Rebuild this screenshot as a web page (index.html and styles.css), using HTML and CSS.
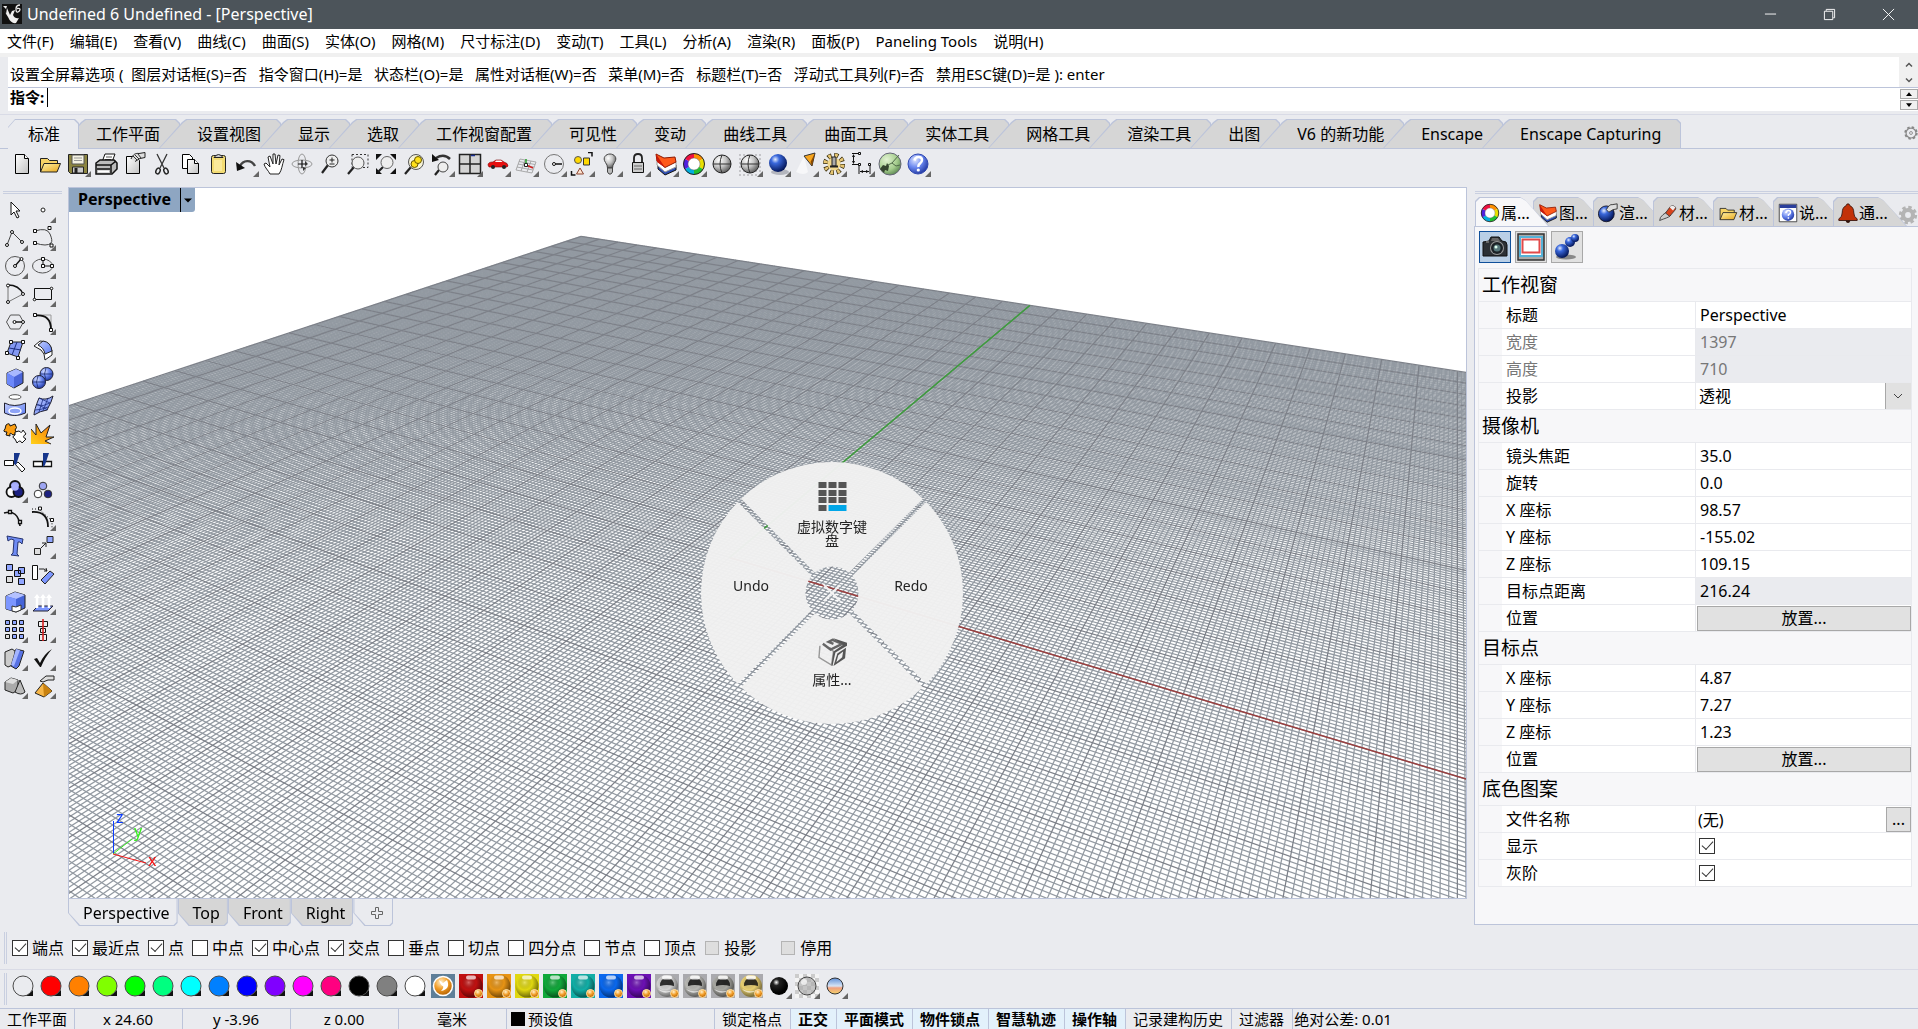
FILE: index.html
```html
<!DOCTYPE html>
<html lang="zh-CN">
<head>
<meta charset="utf-8">
<title>Undefined 6 Undefined - [Perspective]</title>
<link rel="stylesheet" href="styles.css">
</head>
<body>
<svg class="defs" aria-hidden="true">
<defs>
<radialGradient id="g-blue" cx=".35" cy=".3" r=".75"><stop offset="0" stop-color="#e4edff"/><stop offset=".3" stop-color="#3a68dc"/><stop offset="1" stop-color="#00104e"/></radialGradient>
<radialGradient id="g-peri" cx=".35" cy=".3" r=".75"><stop offset="0" stop-color="#dde4ff"/><stop offset=".5" stop-color="#6b88f0"/><stop offset="1" stop-color="#2036a0"/></radialGradient>
<radialGradient id="g-grey" cx=".35" cy=".3" r=".75"><stop offset="0" stop-color="#fff"/><stop offset=".5" stop-color="#c4c4c4"/><stop offset="1" stop-color="#555"/></radialGradient>
<radialGradient id="g-green" cx=".35" cy=".3" r=".8"><stop offset="0" stop-color="#e2f3d2"/><stop offset=".6" stop-color="#a4cc8c"/><stop offset="1" stop-color="#4f7a48"/></radialGradient>
<radialGradient id="g-black" cx=".35" cy=".3" r=".6"><stop offset="0" stop-color="#fff"/><stop offset=".3" stop-color="#222"/><stop offset="1" stop-color="#000"/></radialGradient>
<radialGradient id="g-orange" cx=".4" cy=".3" r=".7"><stop offset="0" stop-color="#fff2d0"/><stop offset=".5" stop-color="#f3a02c"/><stop offset="1" stop-color="#b66200"/></radialGradient>
<radialGradient id="g-shade" cx=".4" cy=".35" r=".65"><stop offset="0" stop-color="#fff" stop-opacity=".35"/><stop offset=".5" stop-color="#000" stop-opacity="0"/><stop offset="1" stop-color="#000" stop-opacity=".5"/></radialGradient>
<linearGradient id="g-steel" x1="0" y1="0" x2="1" y2="1"><stop offset="0" stop-color="#fff"/><stop offset="1" stop-color="#c2c2c2"/></linearGradient>
<linearGradient id="g-folder" x1="0" y1="0" x2="1" y2="1"><stop offset="0" stop-color="#fff3a8"/><stop offset="1" stop-color="#e8a71c"/></linearGradient>
<linearGradient id="g-sky" x1="0" y1="0" x2="0" y2="1"><stop offset="0" stop-color="#5e8fd8"/><stop offset=".5" stop-color="#d6e4f6"/><stop offset=".62" stop-color="#f0a080"/><stop offset="1" stop-color="#f4d26a"/></linearGradient>
<linearGradient id="g-per" x1="0" y1="0" x2="1" y2="1"><stop offset="0" stop-color="#c3ceff"/><stop offset="1" stop-color="#5c7cf0"/></linearGradient>
<linearGradient id="g-flame" x1="0" y1="1" x2="1" y2="0"><stop offset="0" stop-color="#ffd21a"/><stop offset=".6" stop-color="#fb9a10"/><stop offset="1" stop-color="#e05a00"/></linearGradient>

<symbol id="i-new" viewBox="0 0 24 24"><path d="M5.500 2.500h9l4 4v15h-13z" fill="url(#g-steel)" stroke="#000"/><path d="M14.500 2.500v4h4" fill="#fff" stroke="#000"/></symbol>
<symbol id="i-open" viewBox="0 0 24 24"><path d="M2.500 20V6.500h7l2 2h8v3" fill="#f6d365" stroke="#222"/><path d="M2.500 20 6 11.500h16.500L19 20z" fill="url(#g-folder)" stroke="#222"/></symbol>
<symbol id="i-save" viewBox="0 0 24 24"><path d="M2.500 2.500h19v19h-17l-2-2z" fill="#8b8440" stroke="#222"/><path d="M6 3h12v9H6z" fill="#f4f2e2" stroke="#555"/><path d="M6.500 15h11v6h-11z" fill="#c9c9c9" stroke="#222"/><path d="M8.500 16h3v5h-3z" fill="#222"/><path d="M8 6h8M8 8.500h8" stroke="#999"/></symbol>
<symbol id="i-print" viewBox="0 0 24 24"><path d="M8 10 11 2h10l-3 8" fill="#fff" stroke="#111"/><path d="M12 5h6M11 7.500h6" stroke="#555"/><path d="M2 11l4-3h14l3 3v6l-5 5H2z" fill="#bbb" stroke="#111" stroke-width="1.500"/><path d="M2 13h15l5-4M17 13v8M3 17h13" fill="none" stroke="#111" stroke-width="1.500"/><path d="M4 18.500h11v2H4z" fill="#fff"/></symbol>
<symbol id="i-props" viewBox="0 0 24 24"><path d="M4.500 4.500h9l4 4v13h-13z" fill="url(#g-steel)" stroke="#000"/><path d="M9 7c2-5 5-6 8-5.500l6-1v5l-5 1-5 3" fill="#ddd" stroke="#222"/><path d="M11 4l4 4M13 3l4 4M16 2l3 4" stroke="#333"/></symbol>
<symbol id="i-cut" viewBox="0 0 24 24"><path d="M7 2l7 14M17 2l-7 14" stroke="#333" stroke-width="1.300"/><ellipse cx="8" cy="19" rx="2" ry="3" transform="rotate(25 8 19)" fill="none" stroke="#222" stroke-width="1.400"/><ellipse cx="16" cy="19" rx="2" ry="3" transform="rotate(-25 16 19)" fill="none" stroke="#222" stroke-width="1.400"/></symbol>
<symbol id="i-copy" viewBox="0 0 24 24"><path d="M4.500 2.500h7l3 3v11h-10z" fill="#fff" stroke="#000"/><path d="M9.500 7.500h7l4 4v10h-11z" fill="url(#g-steel)" stroke="#000"/><path d="M16.500 7.500v4h4" fill="#fff" stroke="#000"/></symbol>
<symbol id="i-paste" viewBox="0 0 24 24"><rect x="5.500" y="3.500" width="14" height="18" rx="2" fill="#f3dc74" stroke="#222"/><path d="M8 5.500q4.500-6 9 0z" fill="#ccc" stroke="#222"/><path d="M8 8h8v11H8z" fill="#fae99b"/></symbol>
<symbol id="i-undo" viewBox="0 0 24 24"><path d="M6 14C9 8 17 7 21 14" fill="none" stroke="#444" stroke-width="2.400"/><path d="M2 10l1 9 8-3z" fill="#111"/></symbol>
<symbol id="i-hand" viewBox="0 0 24 24"><path d="M8 22C6 18 3 16 2 12l2-1 4 4L6 5l2-1 3 8V2h2l1 10 2-9 2 .5L17 13l3-6 2 .6C20 13 20 18 17 22z" fill="#fff" stroke="#222"/></symbol>
<symbol id="i-rotate" viewBox="0 0 24 24"><ellipse cx="12" cy="12" rx="10" ry="4" fill="none" stroke="#999"/><ellipse cx="12" cy="12" rx="4" ry="10" fill="none" stroke="#999"/><path d="M12 8v8M8 12h8" stroke="#111" stroke-width="1.200"/><path d="M13 15l3 1-3 3zM15 9l3 3-3 2z" fill="#333"/></symbol>
<symbol id="i-zoom" viewBox="0 0 24 24"><path d="M10 13L4 21" stroke="#222" stroke-width="2.200"/><circle cx="14" cy="9" r="6" fill="#eee" stroke="#333"/><path d="M11.500 8h5M14 5.500v5M11.500 12h5" stroke="#222"/></symbol>
<symbol id="i-zoomwin" viewBox="0 0 24 24"><path d="M6 2.500h16v13H6z" fill="none" stroke="#333" stroke-dasharray="2 2"/><path d="M8 15L2 22" stroke="#222" stroke-width="2.200"/><circle cx="12" cy="11" r="6" fill="#eee" stroke="#555"/></symbol>
<symbol id="i-zoomext" viewBox="0 0 24 24"><path d="M2 2h6L2 8zM22 2h-6l6 6zM2 22v-6l6 6zM22 22h-6l6-6z" fill="#111"/><path d="M9 15l-5 5" stroke="#222" stroke-width="2.200"/><circle cx="13" cy="10.500" r="6" fill="#eee" stroke="#666"/></symbol>
<symbol id="i-zoomsel" viewBox="0 0 24 24"><path d="M9 15L3 22" stroke="#222" stroke-width="2.200"/><circle cx="14" cy="10" r="7.500" fill="#f6f3d8" stroke="#555"/><circle cx="12.500" cy="12" r="3.500" fill="#ffe11a" stroke="#655600"/><circle cx="16" cy="8" r="3.500" fill="#ffe11a" stroke="#655600"/></symbol>
<symbol id="i-zoomback" viewBox="0 0 24 24"><path d="M6 6q8-5 14 1" fill="none" stroke="#333" stroke-width="2.500"/><path d="M2 2v8l7-2z" fill="#111"/><path d="M9 18l-4 5" stroke="#222" stroke-width="2.200"/><circle cx="13" cy="15" r="5" fill="#eee" stroke="#444"/></symbol>
<symbol id="i-views" viewBox="0 0 24 24"><path d="M1.500 2.500h21v19h-21z" fill="#d4d4d4" stroke="#222" stroke-width="1.500"/><path d="M12 2v20M1 12h22" stroke="#222" stroke-width="1.500"/><path d="M13 3.500h4" stroke="#1a2f90" stroke-width="1.500"/></symbol>
<symbol id="i-car" viewBox="0 0 24 24"><path d="M2 13q0-3 5-3l3-2h5l3 2q4 1 4 4l-1 1H3z" fill="#e81010" stroke="#7a0000" stroke-width=".6"/><path d="M10 8.500h5l1.500 1.500H9z" fill="#fff"/><circle cx="7" cy="15" r="2" fill="#222"/><circle cx="18" cy="15" r="2" fill="#222"/></symbol>
<symbol id="i-cplane" viewBox="0 0 24 24"><path d="M6 7l16 3-4 11-16-3zM4 12l16 3M11 8L7 19M17 9l-4 11M5 9.500l16 3M3 15l16 3" fill="none" stroke="#999" stroke-width=".8"/><path d="M12 13V7" stroke="#18a020" stroke-width="1.400"/><path d="M12 13l7 3" stroke="#d02020" stroke-width="1.400"/><path d="M10.500 11.500h3v3h-3z" fill="#fff" stroke="#222"/></symbol>
<symbol id="i-circ" viewBox="0 0 24 24"><circle cx="12" cy="12" r="9.500" fill="none" stroke="#777"/><path d="M13 12h7" stroke="#111" stroke-width="1.500"/><circle cx="12" cy="12" r="1.500" fill="#fff" stroke="#111"/></symbol>
<symbol id="i-select" viewBox="0 0 24 24"><path d="M18 .500h4v4M1.500 19v4h4" fill="none" stroke="#111" stroke-width="1.500"/><circle cx="8" cy="8" r="3.500" fill="#ffd800" stroke="#555"/><path d="M13.500 6h6v7h-6z" fill="#ffd800" stroke="#333"/><path d="M10 16l3.500 6h-7z" fill="#ffe3cf" stroke="#8a4430"/></symbol>
<symbol id="i-bulb" viewBox="0 0 24 24"><path d="M9.500 16q0-3-2-5.500C4 5.500 8 2 12 2s8 3.500 4.500 8.500q-2 2.500-2 5.500z" fill="url(#g-grey)" stroke="#444"/><path d="M9.500 16h5v4l-1.500 2h-2l-1.500-2z" fill="#bbb" stroke="#444"/></symbol>
<symbol id="i-lock" viewBox="0 0 24 24"><path d="M8 11V6q0-4 4-4t4 4v5" fill="none" stroke="#222" stroke-width="1.800"/><path d="M6.500 10.500h11v10h-11z" fill="#ccc" stroke="#111"/><path d="M8 14h8M8 17h8" stroke="#666"/></symbol>
<symbol id="i-layers" viewBox="0 0 24 24"><path d="M4 12v5l7 6 11-5v-5z" fill="#2c4db4" stroke="#111"/><path d="M3 8v5l8 7 11-5v-5z" fill="#fff" stroke="#999"/><path d="M2 2l8 4 11-1 1 5-11 5.500L3 9z" fill="#ff5a1a" stroke="#8e1800"/><path d="M2 2l9 13.500L3 10z" fill="#c81a0c"/></symbol>
<symbol id="i-wheel" viewBox="0 0 24 24"><g fill="none" stroke-width="5"><path d="M12 4a8 8 0 0 1 7 4" stroke="#ff9000"/><path d="M19 8a8 8 0 0 1 0 8" stroke="#e8e000"/><path d="M19 16a8 8 0 0 1-7 4" stroke="#20c030"/><path d="M12 20a8 8 0 0 1-7-4" stroke="#00b0e0"/><path d="M5 16a8 8 0 0 1 0-8" stroke="#5020e0"/><path d="M5 8a8 8 0 0 1 7-4" stroke="#f01040"/></g><circle cx="12" cy="12" r="10.500" fill="none" stroke="#222"/><circle cx="12" cy="12" r="6" fill="#fff" stroke="#666" stroke-width=".5"/></symbol>
<symbol id="i-shade" viewBox="0 0 24 24"><circle cx="12" cy="12" r="9" fill="url(#g-grey)" stroke="#222"/><path d="M3 12h18M12 3q-4 9 0 18" fill="none" stroke="#333"/></symbol>
<symbol id="i-ghost" viewBox="0 0 24 24"><path d="M1 3h23M1 7h23M1 11h23M1 15h23M1 19h23M1 23h23" stroke="#c4c4c8" stroke-width="2" stroke-dasharray="2 2"/><circle cx="12" cy="12" r="9" fill="url(#g-grey)" stroke="#222"/><path d="M3 12h18M12 3q-4 9 0 18" fill="none" stroke="#333"/></symbol>
<symbol id="i-blue" viewBox="0 0 24 24"><ellipse cx="14" cy="20" rx="9" ry="3" fill="#b4b6be"/><circle cx="12" cy="11" r="9" fill="url(#g-blue)"/></symbol>
<symbol id="i-spot" viewBox="0 0 24 24"><path d="M10 4L2 20q8 4 12 0z" fill="#fff" opacity=".6"/><path d="M10 4l11-3-3 13z" fill="#f7a51e" stroke="#333"/><path d="M21 1l-3 13-1.500-4z" fill="#8a4a00"/></symbol>
<symbol id="i-gear" viewBox="0 0 24 24"><circle cx="12" cy="12" r="8.500" fill="none" stroke="#332808" stroke-width="5" stroke-dasharray="4 2.675"/><circle cx="12" cy="12" r="8.500" fill="none" stroke="#e6c674" stroke-width="4" stroke-dasharray="2.600 4.075" stroke-dashoffset="-.7"/><circle cx="12" cy="12" r="6.500" fill="#f1d88e"/><path d="M10 5h4v9h-4z" fill="#aaa" stroke="#222"/><path d="M8 14.500h8" stroke="#222" stroke-width="2"/></symbol>
<symbol id="i-dim" viewBox="0 0 24 24"><path d="M2 1.500h8M2 12.500h7M3.500 3v8M9 12v10M20 12v10M10 19.500h9" fill="none" stroke="#111"/><path d="M8.500 .500h2v2h-2zM8.500 11.500h2v2h-2zM18.500 11.500h2v2h-2z" fill="#fff" stroke="#111"/><path d="M3.500 2l-1.500 3h3zM3.500 12l-1.500-3h3zM10 19.500l3-1.500v3zM19 19.500l-3-1.500v3z" fill="#111"/></symbol>
<symbol id="i-hopper" viewBox="0 0 24 24"><circle cx="12" cy="12" r="11" fill="url(#g-green)" stroke="#667"/><path d="M10 13l4-2 7-8M14 11l4 3 4-1" fill="none" stroke="#4f6a48"/><path d="M2 17l3-4 3 1 1-3 2 3-1 5-3-1-1 3z" fill="#35452f"/></symbol>
<symbol id="i-help" viewBox="0 0 24 24"><circle cx="12" cy="12" r="10" fill="url(#g-peri)" stroke="#3048b0"/><path d="M8.500 8.500q.5-3.500 4-3.500t3.500 3q0 2-2 3.500t-1.500 3.500" fill="none" stroke="#fff" stroke-width="2.500"/><circle cx="12.300" cy="18" r="1.600" fill="#fff"/></symbol>

<symbol id="i-arrow" viewBox="0 0 24 24"><path d="M8 4v13l3-3 3 6 2-1-3-6h4z" fill="#fff" stroke="#111"/></symbol>
<symbol id="i-point" viewBox="0 0 24 24"><circle cx="12" cy="12" r="2" fill="#fff" stroke="#222"/></symbol>
<symbol id="i-poly" viewBox="0 0 24 24"><path d="M4 19L9 6l10 10" fill="none" stroke="#444"/><g fill="#fff" stroke="#111"><circle cx="4" cy="19" r="1.500"/><circle cx="9" cy="6" r="1.500"/><circle cx="19" cy="16" r="1.500"/></g></symbol>
<symbol id="i-curve" viewBox="0 0 24 24"><path d="M4 5q12-4 15 3t1 9q-4 4-16 0" fill="none" stroke="#444"/><path d="M2.500 3.500h3v3h-3zM17 .500h3v3h-3zM2.500 15.500h3v3h-3zM19 18h3v3h-3z" fill="#fff" stroke="#111"/></symbol>
<symbol id="i-circle" viewBox="0 0 24 24"><circle cx="12" cy="12" r="9.500" fill="none" stroke="#555"/><path d="M12 12l6-7" stroke="#111" stroke-width="1.300"/><circle cx="12" cy="12" r="1.500" fill="#fff" stroke="#111"/><circle cx="18.500" cy="5" r="1.500" fill="#fff" stroke="#111"/></symbol>
<symbol id="i-ellipse" viewBox="0 0 24 24"><ellipse cx="11.500" cy="12" rx="10" ry="7" fill="none" stroke="#555"/><path d="M12 5v7h9" fill="none" stroke="#111"/><path d="M10.500 3.500h3v3h-3zM10.500 10.500h3v3h-3zM19.500 10.500h3v3h-3z" fill="#fff" stroke="#111"/></symbol>
<symbol id="i-arc" viewBox="0 0 24 24"><path d="M5 3v17l15-8" fill="none" stroke="#777"/><path d="M5 3q11 0 15 9" fill="none" stroke="#111" stroke-width="1.400"/><g fill="#fff" stroke="#111"><circle cx="5" cy="3.500" r="1.500"/><circle cx="5" cy="20" r="1.500"/><circle cx="20" cy="12" r="1.500"/></g></symbol>
<symbol id="i-rect" viewBox="0 0 24 24"><path d="M3.500 6.500h17v11h-17z" fill="none" stroke="#111"/><circle cx="3.500" cy="17.500" r="1.300" fill="#fff" stroke="#111"/><circle cx="20.500" cy="6.500" r="1.300" fill="#fff" stroke="#111"/></symbol>
<symbol id="i-hex" viewBox="0 0 24 24"><path d="M3.500 12l4-7h9l4 7-4 7h-9z" fill="none" stroke="#555"/><path d="M12 12h8" stroke="#111" stroke-width="1.400"/><circle cx="11.500" cy="12" r="1.500" fill="#fff" stroke="#111"/><circle cx="20" cy="12" r="1.500" fill="#fff" stroke="#111"/></symbol>
<symbol id="i-fillet" viewBox="0 0 24 24"><path d="M5 5h15v15" fill="none" stroke="#999"/><path d="M5 5.500q15-1 15 14" fill="none" stroke="#111" stroke-width="1.800"/><path d="M2.500 3.500h3v3h-3zM18.500 18.500h3v3h-3z" fill="#fff" stroke="#111"/></symbol>
<symbol id="i-srf" viewBox="0 0 24 24"><path d="M8 4h12l-5 15L4 15z" fill="#8398f2" stroke="#222"/><path d="M14 4l-5 13M6 10l12 2" stroke="#1d2f80"/><path d="M6.500 2.500h3v3h-3zM18.500 2.500h3v3h-3zM2.500 13.500h3v3h-3zM13.500 18.500h3v3h-3z" fill="#fff" stroke="#111"/></symbol>
<symbol id="i-bend" viewBox="0 0 24 24"><path d="M3 8l6-5q10 0 12 10v4l-7 5q0-7-4-10z" fill="#fff" stroke="#222"/><path d="M7 7l5-4q8 1 9 10l-7 3q-1-6-7-9z" fill="url(#g-per)" stroke="#222"/></symbol>
<symbol id="i-box" viewBox="0 0 24 24"><path d="M4 7l9-4 7 3v11l-9 5-7-4z" fill="#4a64d8" stroke="#222"/><path d="M4 7l9-4 7 3-9 5z" fill="#a8b8ff"/><path d="M4 7l7 4v11l-7-4z" fill="#6c88fa"/></symbol>
<symbol id="i-balls" viewBox="0 0 24 24"><circle cx="15.500" cy="8" r="6.500" fill="url(#g-peri)" stroke="#223"/><circle cx="8" cy="16" r="6.500" fill="url(#g-peri)" stroke="#223"/><path d="M9 8h13M2 16h13M15 2q-3 6 0 12M7 10q-3 6 0 12" fill="none" stroke="#182a70" stroke-width=".8"/></symbol>
<symbol id="i-proj" viewBox="0 0 24 24"><ellipse cx="12" cy="3" rx="6" ry="2.300" fill="#fff" stroke="#555"/><path d="M1.500 9q10 5 21 0v10q-11 5-21 0z" fill="url(#g-per)" stroke="#223"/><ellipse cx="12" cy="17" rx="6" ry="3" fill="#8ea3f6" stroke="#fff" stroke-width="1.500"/></symbol>
<symbol id="i-mesh" viewBox="0 0 24 24"><path d="M8 4q7 3 14-2-1 5-6 14-7 1-13 5 0-5 5-17z" fill="url(#g-per)" stroke="#223"/><path d="M12 5L8 18M17 4l-5 13M6 11q6 2 13-2M4 16q6 0 13-3M8 4l11 5M6 10l11 6" fill="none" stroke="#1d2f80" stroke-width=".8"/></symbol>
<symbol id="i-puzzle" viewBox="0 0 24 24"><path d="M3 3q4-3 4 1l5-2q3 4 0 6l2 3-4 2q-4-4-3 1l-4-1 1-3q-5 0-2-3z" fill="#fb9e12" stroke="#111"/><path d="M12 10l4-1q3 3 4-1l3 4q-5 3 0 5l-4 4q-2-4-5 0l-2-4q-4-2 0-4z" fill="#fff" stroke="#111"/></symbol>
<symbol id="i-flame" viewBox="0 0 24 24"><path d="M0 22V7l5 6L5 2l5 9 9-8-4 12 8 0-9 4 6 3z" fill="url(#g-flame)"/><path d="M0 7l5 6L5 2l5 9 9-8-4 12 8 0-9 4 6 3" fill="none" stroke="#222"/></symbol>
<symbol id="i-trim" viewBox="0 0 24 24"><path d="M1.500 10.500h9v5h-9zM12 14l3-2 7 7-3 3z" fill="#fff" stroke="#111"/><path d="M11 3h6l-4 12-2-1z" fill="#16368c"/></symbol>
<symbol id="i-split" viewBox="0 0 24 24"><path d="M2.500 11.500h9v5h-9zM12.500 11.500h8v5h-8z" fill="#fff" stroke="#111" stroke-width="1.300"/><path d="M12 3h6l-4 12-2 2z" fill="#16368c"/></symbol>
<symbol id="i-group" viewBox="0 0 24 24"><g stroke="#111" stroke-width="1.800"><circle cx="12" cy="8" r="5" fill="#9da5f2"/><circle cx="8.500" cy="14" r="5" fill="#fff"/><circle cx="15.500" cy="14" r="5" fill="#1c2080"/></g><circle cx="12" cy="9" r="3.800" fill="#aab0ff"/></symbol>
<symbol id="i-ungroup" viewBox="0 0 24 24"><g stroke="#333"><circle cx="12" cy="8" r="3.800" fill="#9da5f2"/><circle cx="7" cy="16" r="3.800" fill="#fff"/><circle cx="17" cy="16" r="3.800" fill="#1c2080"/></g></symbol>
<symbol id="i-editpt" viewBox="0 0 24 24"><path d="M1 7q14-4 16 13" fill="none" stroke="#111" stroke-width="1.600"/><path d="M5.500 4.500h3v3h-3zM15.500 14.500h3v3h-3z" fill="#fff" stroke="#111" stroke-width="1.300"/></symbol>
<symbol id="i-ctrl" viewBox="0 0 24 24"><path d="M1 6q16-1 16 15" fill="none" stroke="#111" stroke-width="1.800"/><path d="M1 3h7l13 12v7" fill="none" stroke="#111" stroke-dasharray="1 2"/><path d="M7.500 1h3v3h-3zM19.500 12.500h3v3h-3z" fill="#fff" stroke="#111"/></symbol>
<symbol id="i-letter" viewBox="0 0 24 24"><path d="M4 2l16 3-1 5-2-2-2 0-1 12 2 2-8-1 2-2 1-13-3-1-3 2z" fill="#6f8cf4" stroke="#26336e"/></symbol>
<symbol id="i-move" viewBox="0 0 24 24"><path d="M16 2.500h6v6h-6z" fill="#8fa6ff" stroke="#222"/><path d="M3.500 14.500h6v6h-6z" fill="#ddd" stroke="#222"/><path d="M10 14l5-5m0 0h-4m4 0v4" stroke="#222" fill="none"/></symbol>
<symbol id="i-copyobj" viewBox="0 0 24 24"><g stroke="#111" fill="#91a6ff"><path d="M3.500 2.500h6v6h-6zM15.500 5.500h6v6h-6zM11.500 8.500h6v6h-6zM15.500 16.500h6v6h-6z"/><path d="M3.500 14.500h6v6h-6z" fill="#ddd"/></g></symbol>
<symbol id="i-orient" viewBox="0 0 24 24"><path d="M1.500 3.500h5v14h-5z" fill="#fff" stroke="#111"/><path d="M10 18L19 9l4 3-9 10z" fill="#7c96ff" stroke="#222"/><path d="M8 7h5l3 2m-1-3l1 3h-3" fill="none" stroke="#222"/></symbol>
<symbol id="i-solid" viewBox="0 0 24 24"><path d="M3 6l9-4 10 3v13l-9 4-10-3z" fill="#4564d8" stroke="#222"/><path d="M3 6l9-4 10 3-9 4z" fill="#b4c1ff"/><path d="M3 6l10 3v13l-10-3z" fill="#7c96ff"/><path d="M9 16l4 1 5-2v5l-5 2-4-1z" fill="#fff" stroke="#333"/></symbol>
<symbol id="i-extrude" viewBox="0 0 24 24"><path d="M7 16h15l-5 5H2z" fill="#7c96ff" stroke="#223"/><path d="M6 18V6M12 18V6M18 18V6" stroke="#fff" stroke-width="2.500"/><path d="M3 8l3-4 3 4zM9 8l3-4 3 4zM15 8l3-4 3 4z" fill="#fff"/></symbol>
<symbol id="i-array" viewBox="0 0 24 24"><path d="M2.500 2.500h4v4h-4zM9.500 2.500h4v4h-4zM16.500 2.500h4v4h-4zM2.500 9.500h4v4h-4zM9.500 9.500h4v4h-4zM16.500 9.500h4v4h-4zM9.500 16.500h4v4h-4zM16.500 16.500h4v4h-4z" fill="#8fa6ff" stroke="#111"/><path d="M2.500 16.500h4v4h-4z" fill="#ddd" stroke="#111"/></symbol>
<symbol id="i-align" viewBox="0 0 24 24"><path d="M7.500 3.500h9v5h-9zM9.500 10.500h5v4h-5zM8.500 16.500h7v6h-7z" fill="#eee" stroke="#111"/><path d="M12 1v22" stroke="#d42020" stroke-width="2" opacity=".8"/></symbol>
<symbol id="i-shear" viewBox="0 0 24 24"><path d="M2 6l7-3 3 2v13l-7 3-3-2z" fill="#ccc" stroke="#222"/><path d="M13 3l8 2-5 15-3 3-5-3z" fill="#5872e4" stroke="#222"/><path d="M13 3l4 1-6 16-3-1z" fill="#a4b5ff"/></symbol>
<symbol id="i-check" viewBox="0 0 24 24"><path d="M3 13l3-1 3 5Q13 8 21 3q-7 8-11 18H9z" fill="#111"/></symbol>
<symbol id="i-prims" viewBox="0 0 24 24"><path d="M2 8l6-4 7 2v10l-5 3-8-3z" fill="#aaa" stroke="#222"/><path d="M2 8l6-4 7 2-5 4z" fill="#ddd"/><path d="M17 6l5 12q-4 4-10 0z" fill="#bbb" stroke="#222"/></symbol>
<symbol id="i-pyr" viewBox="0 0 24 24"><path d="M12 9l9 8-8 6-9-4z" fill="#f6b648" stroke="#222"/><path d="M12 9l9 8-8 6z" fill="#c98210"/><path d="M9 7l6-5h8v4h-6l-5 2z" fill="#ddd" stroke="#222"/></symbol>

<symbol id="s-dot" viewBox="0 0 24 24"><path d="M16 21l6-5v6h-9z" fill="#111"/><circle cx="12" cy="12" r="10" stroke="#4a4a4a"/></symbol>
<symbol id="s-none" viewBox="0 0 24 24"><path d="M0 0h24v24H0z" fill="#5f7f98"/><circle cx="12" cy="12" r="9.500" fill="url(#g-orange)" stroke="#fff" stroke-width="1.500"/><path d="M8 6l4 3 4-3q4 9-6 11 3-3 2-5-2 0-4-6z" fill="#fff"/></symbol>
<symbol id="s-tile" viewBox="0 0 24 24"><path d="M0 0h24v24H0z"/><circle cx="12" cy="12" r="11.500"/><circle cx="12" cy="12" r="11.500" fill="url(#g-shade)"/><rect x="7" y="1.500" width="10" height="4" rx="2" fill="#fff" opacity=".7"/><circle cx="19.500" cy="19.500" r="4" fill="url(#g-orange)" stroke="#ffe2a8"/></symbol>
<symbol id="s-metal" viewBox="0 0 24 24"><path d="M0 0h24v24H0z" fill="#aaaaae"/><circle cx="12" cy="12" r="11"/><circle cx="12" cy="12" r="11" fill="url(#g-shade)"/><path d="M5 12q0-8 7-8t7 8q-7-2-14 0z" fill="#111" opacity=".85"/><rect x="7" y="1.500" width="10" height="4" rx="2" fill="#fff" opacity=".85"/><path d="M3 15q7 7 15 1-7 3-15-1z" fill="#fff" opacity=".6"/><circle cx="19.500" cy="19.500" r="4" fill="url(#g-orange)" stroke="#ffe2a8"/></symbol>
<symbol id="s-black" viewBox="0 0 24 24"><circle cx="12" cy="12" r="9" fill="url(#g-black)"/></symbol>
<symbol id="s-glass" viewBox="0 0 24 24"><path d="M0 0h24v24H0z" fill="#f4f4f4"/><path d="M0 2h24M0 10h24M0 18h24" stroke="#ccc" stroke-width="4" stroke-dasharray="4 4"/><path d="M4 6h20M4 14h20M4 22h20" stroke="#ccc" stroke-width="4" stroke-dasharray="4 4"/><circle cx="12" cy="12" r="9" fill="#aaa" fill-opacity=".65" stroke="#444"/><circle cx="9" cy="8" r="3" fill="#fff" opacity=".7"/></symbol>
<symbol id="s-env" viewBox="0 0 24 24"><circle cx="12" cy="12" r="8" fill="url(#g-sky)" stroke="#333"/></symbol>
<symbol id="p-brush" viewBox="0 0 24 24"><path d="M2 21q0-4 4-7t5-3l4 4q-2 2-5 3t-8 3z" fill="#ccc" stroke="#333"/><path d="M9 12l6-8q3-2 6 1 1 2-1 4l-6 7z" fill="#d8431c" stroke="#333"/><path d="M15 4q3-2 6 1l-3 4-4-4z" fill="#eee"/></symbol>
<symbol id="p-help" viewBox="0 0 24 24"><path d="M1.500 1.500h21v21h-21z" fill="#fff" stroke="#333"/><path d="M2 2h20v4H2z" fill="#2b3f9c"/><circle cx="12" cy="14" r="7.500" fill="url(#g-peri)"/><path d="M9.500 12q.5-3 3-3t2.500 2-2.500 3v1.500M12.500 17v2" fill="none" stroke="#fff" stroke-width="1.800"/></symbol>
<symbol id="p-bell" viewBox="0 0 24 24"><path d="M10 3q0-2 2-2t2 2q5 2 5 9 0 5 4 7v2H1v-2q4-2 4-7 0-7 5-9z" fill="#c23208" stroke="#301008"/><path d="M9 21h6q-1 3-3 3t-3-3z" fill="#301008"/></symbol>
<symbol id="p-render" viewBox="0 0 24 24"><circle cx="10" cy="13" r="9.500" fill="url(#g-blue)" stroke="#112"/><path d="M10 8q4-7 7-6l6-1v6l-5 1-5 3z" fill="#ddd" stroke="#222"/></symbol>
<symbol id="p-camera" viewBox="0 0 28 28"><path d="M2 9l6-1 2-4h8l3 4 4 1 1 3v11H2z" fill="#2c3034" stroke="#111"/><path d="M5 8h3v2H5zM11 5h6l2 3h-9z" fill="#666"/><circle cx="16" cy="15" r="7" fill="#999"/><circle cx="16" cy="15" r="6" fill="#1c2226"/><circle cx="16" cy="15" r="3.500" fill="#56767a"/><circle cx="15" cy="14" r="1.500" fill="#dfe"/></symbol>
<symbol id="p-frame" viewBox="0 0 28 28"><path d="M1 1h26v26H1z" fill="#aaa" stroke="#333" stroke-width="1.500"/><path d="M3 4h22v19H3z" fill="#fff" stroke="#56b2d8" stroke-width="2"/><path d="M5.500 6.500h17v13h-17z" fill="#fff" stroke="#e24a4a" stroke-width="2"/></symbol>
<symbol id="p-chain" viewBox="0 0 28 28"><ellipse cx="13" cy="24" rx="10" ry="2.500" fill="#888"/><circle cx="9" cy="18" r="7" fill="url(#g-blue)"/><circle cx="17" cy="9" r="5" fill="url(#g-blue)"/><circle cx="22" cy="5" r="4" fill="url(#g-blue)"/></symbol>
<symbol id="p-cog" viewBox="0 0 24 24"><circle cx="12" cy="12" r="6" fill="none" stroke="currentColor" stroke-width="5"/><circle cx="12" cy="12" r="9" fill="none" stroke="currentColor" stroke-width="4" stroke-dasharray="4 3.070"/></symbol>
<symbol id="p-cogline" viewBox="0 0 24 24"><circle cx="12" cy="12" r="9.500" fill="none" stroke="#888" stroke-width="4" stroke-dasharray="4 3.460"/><circle cx="12" cy="12" r="8.500" fill="#eaebef" stroke="#888" stroke-width="2"/><circle cx="12" cy="12" r="2.500" fill="none" stroke="#888" stroke-width="1.500"/></symbol>
</defs>
</svg>

<div class="app">
<header class="titlebar">
  <svg class="logo" viewBox="0 0 20 20"><path d="M0 0h20v20H0z" fill="#111"/><path d="M1 5l5 8q3 7 8 6l3-5q-4 1-6-3l2-5-3 1-2 4-3-7-1 6zM1 2l3 3 1-3z" fill="#eee"/><path d="M18 1q-4 0-4 4t2 3 2-2.500-3-1" fill="none" stroke="#eee" stroke-width="1.300"/></svg>
  <h1>Undefined 6 Undefined - [Perspective]</h1>
  <div class="winbtns">
    <button aria-label="最小化"><svg viewBox="0 0 14 14"><path d="M1 6.500h12"/></svg></button>
    <button aria-label="还原"><svg viewBox="0 0 14 14"><path d="M1.500 3.500h9v9h-9zM3.500 3V1.500h9v9H11"/></svg></button>
    <button aria-label="关闭"><svg viewBox="0 0 14 14"><path d="M1 1l12 12M13 1L1 13"/></svg></button>
  </div>
</header>
<nav class="menu">
  <a href="#">文件(F)</a><a href="#">编辑(E)</a><a href="#">查看(V)</a><a href="#">曲线(C)</a><a href="#">曲面(S)</a><a href="#">实体(O)</a><a href="#">网格(M)</a><a href="#">尺寸标注(D)</a><a href="#">变动(T)</a><a href="#">工具(L)</a><a href="#">分析(A)</a><a href="#">渲染(R)</a><a href="#">面板(P)</a><a href="#">Paneling Tools</a><a href="#">说明(H)</a>
</nav>

<section class="command">
  <div class="history"><p>设置全屏幕选项 (&nbsp; 图层对话框(S)=否&nbsp;&nbsp; 指令窗口(H)=是&nbsp;&nbsp; 状态栏(O)=是&nbsp;&nbsp; 属性对话框(W)=否&nbsp;&nbsp; 菜单(M)=否&nbsp;&nbsp; 标题栏(T)=否&nbsp;&nbsp; 浮动式工具列(F)=否&nbsp;&nbsp; 禁用ESC键(D)=是 ): enter</p>
    <div class="scroll"><button aria-label="上"><svg viewBox="0 0 10 8"><path d="M1 6l4-4 4 4"/></svg></button><button aria-label="下"><svg viewBox="0 0 10 8"><path d="M1 2l4 4 4-4"/></svg></button></div>
  </div>
  <div class="prompt"><label for="cmd">指令:</label><span class="caret"></span><input id="cmd" type="text">
    <div class="spin"><button aria-label="上一个"><svg viewBox="0 0 8 5"><path d="M0 5l4-5 4 5z"/></svg></button><button aria-label="下一个"><svg viewBox="0 0 8 5"><path d="M0 0l4 5 4-5z"/></svg></button></div>
  </div>
</section>

<section class="toolbars">
  <div class="tabs">
    <button class="tab on">标准</button><button class="tab">工作平面</button><button class="tab">设置视图</button><button class="tab">显示</button><button class="tab">选取</button><button class="tab">工作视窗配置</button><button class="tab">可见性</button><button class="tab">变动</button><button class="tab">曲线工具</button><button class="tab">曲面工具</button><button class="tab">实体工具</button><button class="tab">网格工具</button><button class="tab">渲染工具</button><button class="tab">出图</button><button class="tab">V6 的新功能</button><button class="tab">Enscape</button><button class="tab">Enscape Capturing</button>
    <button class="tabcog" aria-label="选项"><svg><use href="#p-cogline"/></svg></button>
  </div>
  <div class="tools">
    <button class="tool" aria-label="新建"><svg><use href="#i-new"/></svg></button>
    <button class="tool" aria-label="打开"><svg><use href="#i-open"/></svg></button>
    <button class="tool fly" aria-label="保存"><svg><use href="#i-save"/></svg></button>
    <button class="tool" aria-label="打印"><svg><use href="#i-print"/></svg></button>
    <button class="tool" aria-label="文件属性"><svg><use href="#i-props"/></svg></button>
    <button class="tool" aria-label="剪切"><svg><use href="#i-cut"/></svg></button>
    <button class="tool" aria-label="复制"><svg><use href="#i-copy"/></svg></button>
    <button class="tool" aria-label="粘贴"><svg><use href="#i-paste"/></svg></button>
    <button class="tool fly" aria-label="复原"><svg><use href="#i-undo"/></svg></button>
    <button class="tool" aria-label="平移"><svg><use href="#i-hand"/></svg></button>
    <button class="tool" aria-label="旋转视图"><svg><use href="#i-rotate"/></svg></button>
    <button class="tool" aria-label="动态缩放"><svg><use href="#i-zoom"/></svg></button>
    <button class="tool" aria-label="框选缩放"><svg><use href="#i-zoomwin"/></svg></button>
    <button class="tool" aria-label="缩放至最大范围"><svg><use href="#i-zoomext"/></svg></button>
    <button class="tool" aria-label="缩放至选取物件"><svg><use href="#i-zoomsel"/></svg></button>
    <button class="tool fly" aria-label="复原视图"><svg><use href="#i-zoomback"/></svg></button>
    <button class="tool fly" aria-label="四个视窗"><svg><use href="#i-views"/></svg></button>
    <button class="tool fly" aria-label="视图"><svg><use href="#i-car"/></svg></button>
    <button class="tool fly" aria-label="工作平面"><svg><use href="#i-cplane"/></svg></button>
    <button class="tool fly" aria-label="物件锁点"><svg><use href="#i-circ"/></svg></button>
    <button class="tool fly" aria-label="选取"><svg><use href="#i-select"/></svg></button>
    <button class="tool fly" aria-label="隐藏"><svg><use href="#i-bulb"/></svg></button>
    <button class="tool fly" aria-label="锁定"><svg><use href="#i-lock"/></svg></button>
    <button class="tool fly" aria-label="图层"><svg><use href="#i-layers"/></svg></button>
    <button class="tool fly" aria-label="颜色"><svg><use href="#i-wheel"/></svg></button>
    <button class="tool" aria-label="着色"><svg><use href="#i-shade"/></svg></button>
    <button class="tool fly" aria-label="半透明"><svg><use href="#i-ghost"/></svg></button>
    <button class="tool fly" aria-label="渲染"><svg><use href="#i-blue"/></svg></button>
    <button class="tool fly" aria-label="灯光"><svg><use href="#i-spot"/></svg></button>
    <button class="tool fly" aria-label="选项"><svg><use href="#i-gear"/></svg></button>
    <button class="tool fly" aria-label="尺寸标注"><svg><use href="#i-dim"/></svg></button>
    <button class="tool" aria-label="参数化"><svg><use href="#i-hopper"/></svg></button>
    <button class="tool fly" aria-label="说明"><svg><use href="#i-help"/></svg></button>
  </div>
</section>

<main class="work">
  <div class="side">
    <button class="tool" aria-label="取消"><svg><use href="#i-arrow"/></svg></button><button class="tool fly" aria-label="点"><svg><use href="#i-point"/></svg></button>
    <button class="tool fly" aria-label="多重直线"><svg><use href="#i-poly"/></svg></button><button class="tool fly" aria-label="曲线"><svg><use href="#i-curve"/></svg></button>
    <button class="tool fly" aria-label="圆"><svg><use href="#i-circle"/></svg></button><button class="tool fly" aria-label="椭圆"><svg><use href="#i-ellipse"/></svg></button>
    <button class="tool fly" aria-label="圆弧"><svg><use href="#i-arc"/></svg></button><button class="tool fly" aria-label="矩形"><svg><use href="#i-rect"/></svg></button>
    <button class="tool fly" aria-label="多边形"><svg><use href="#i-hex"/></svg></button><button class="tool fly" aria-label="圆角"><svg><use href="#i-fillet"/></svg></button>
    <button class="tool fly" aria-label="曲面"><svg><use href="#i-srf"/></svg></button><button class="tool fly" aria-label="曲面圆角"><svg><use href="#i-bend"/></svg></button>
    <button class="tool fly" aria-label="立方体"><svg><use href="#i-box"/></svg></button><button class="tool fly" aria-label="布尔运算"><svg><use href="#i-balls"/></svg></button>
    <button class="tool fly" aria-label="投影曲线"><svg><use href="#i-proj"/></svg></button><button class="tool fly" aria-label="网格"><svg><use href="#i-mesh"/></svg></button>
    <button class="tool" aria-label="组合"><svg><use href="#i-puzzle"/></svg></button><button class="tool" aria-label="炸开"><svg><use href="#i-flame"/></svg></button>
    <button class="tool" aria-label="修剪"><svg><use href="#i-trim"/></svg></button><button class="tool" aria-label="分割"><svg><use href="#i-split"/></svg></button>
    <button class="tool fly" aria-label="群组"><svg><use href="#i-group"/></svg></button><button class="tool" aria-label="解散群组"><svg><use href="#i-ungroup"/></svg></button>
    <button class="tool" aria-label="编辑点"><svg><use href="#i-editpt"/></svg></button><button class="tool fly" aria-label="控制点"><svg><use href="#i-ctrl"/></svg></button>
    <button class="tool" aria-label="文字"><svg><use href="#i-letter"/></svg></button><button class="tool fly" aria-label="移动"><svg><use href="#i-move"/></svg></button>
    <button class="tool" aria-label="复制物件"><svg><use href="#i-copyobj"/></svg></button><button class="tool" aria-label="定位"><svg><use href="#i-orient"/></svg></button>
    <button class="tool fly" aria-label="实体编辑"><svg><use href="#i-solid"/></svg></button><button class="tool fly" aria-label="挤出"><svg><use href="#i-extrude"/></svg></button>
    <button class="tool fly" aria-label="阵列"><svg><use href="#i-array"/></svg></button><button class="tool fly" aria-label="对齐"><svg><use href="#i-align"/></svg></button>
    <button class="tool fly" aria-label="变形"><svg><use href="#i-shear"/></svg></button><button class="tool fly" aria-label="检查"><svg><use href="#i-check"/></svg></button>
    <button class="tool fly" aria-label="图块"><svg><use href="#i-prims"/></svg></button><button class="tool fly" aria-label="历史"><svg><use href="#i-pyr"/></svg></button>
  </div>

  <div class="center">
    <div class="viewport">
      <canvas id="grid"></canvas>
      <div class="vplabel"><button>Perspective</button><button class="vpmenu" aria-label="视窗菜单"><svg viewBox="0 0 10 5"><path d="M0 0h10L5 5z"/></svg></button></div>
      <svg class="triad" viewBox="0 0 60 64"><path d="M8.500 45V12" stroke="#0a3cff"/><path d="M8 45l19-15" stroke="#37f01e"/><path d="M8 45l33 9" stroke="#f51414"/><text x="11" y="14" fill="#0a3cff">z</text><text x="29" y="28" fill="#37f01e">y</text><text x="43" y="57" fill="#f51414">x</text></svg>
      <div class="pie">
        <svg class="piebg" viewBox="-131 -131 262 262"><g fill="#f1f1f1" fill-opacity=".97"><path d="M-17 -20.300L-90.900 -94.300A131 131 0 0 1 90.900 -94.300L17 -20.300A26.500 26.500 0 0 0 -17 -20.300z"/><path d="M20.300 -17L94.300 -90.900A131 131 0 0 1 94.300 90.900L20.300 17A26.500 26.500 0 0 0 20.300 -17z"/><path d="M17 20.300L90.900 94.300A131 131 0 0 1 -90.900 94.300L-17 20.300A26.500 26.500 0 0 0 17 20.300z"/><path d="M-20.300 17L-94.300 90.900A131 131 0 0 1 -94.300 -90.900L-20.300 -17A26.500 26.500 0 0 0 -20.300 17z"/></g><path d="M-8 -8L8 8M8 -8L-8 8" stroke="#f4f4f4" stroke-width="2"/></svg>
        <button class="pie-n"><svg viewBox="0 0 28 29"><path d="M0 0h8v6H0zM10 0h8v6h-8zM20 0h8v6h-8zM0 8h8v6H0zM10 8h8v6h-8zM20 8h8v6h-8zM0 15h8v6H0zM10 15h8v6h-8zM20 15h8v6h-8zM0 23h8v6H0z" fill="#555"/><path d="M10 23h18v6H10z" fill="#00a6e8"/></svg><span>虚拟数字键盘</span></button>
        <button class="pie-w">Undo</button>
        <button class="pie-e">Redo</button>
        <button class="pie-s"><svg viewBox="0 0 30 30"><path d="M2 9L1 21l13 8 2-14-4-4" fill="none" stroke="#999" stroke-width="1.500"/><path d="M5 7l8 6 12-6-10-4-4 2 5 2" fill="none" stroke="#666" stroke-width="2.500"/><path d="M15 1l15 5v3l-12 7-3 14-1-1 2-14 10-7zM29 11l-1 11-12 8 4-13zM26 15l-5 4-2 7 6-5z" fill="#555" fill-rule="evenodd"/></svg><span>属性...</span></button>
      </div>
    </div>
    <div class="vptabs"><button class="on">Perspective</button><button>Top</button><button>Front</button><button>Right</button><button class="on add" aria-label="新增"><svg viewBox="0 0 12 12"><path d="M4.500 .500h3v4h4v3h-4v4h-3v-4h-4v-3h4z"/></svg></button></div>
  </div>

  <aside class="panel">
    <div class="ptabs">
      <button class="on"><svg><use href="#i-wheel"/></svg>属...</button><button><svg><use href="#i-layers"/></svg>图...</button><button><svg><use href="#p-render"/></svg>渲...</button><button><svg><use href="#p-brush"/></svg>材...</button><button><svg><use href="#i-open"/></svg>材...</button><button><svg><use href="#p-help"/></svg>说...</button><button><svg><use href="#p-bell"/></svg>通...</button>
      <svg class="pcog"><use href="#p-cog"/></svg>
    </div>
    <div class="pbody">
      <div class="pages"><button class="on" aria-label="视图"><svg><use href="#p-camera"/></svg></button><button aria-label="边框"><svg><use href="#p-frame"/></svg></button><button aria-label="材质"><svg><use href="#p-chain"/></svg></button></div>
      <table>
        <colgroup><col class="c0"><col class="c1"><col></colgroup>
        <tr class="sec"><th colspan="3">工作视窗</th></tr>
        <tr><td></td><th><label for="f1">标题</label></th><td><input id="f1" value="Perspective"></td></tr>
        <tr class="off"><td></td><th><label for="f2">宽度</label></th><td><input id="f2" value="1397" disabled></td></tr>
        <tr class="off"><td></td><th><label for="f3">高度</label></th><td><input id="f3" value="710" disabled></td></tr>
        <tr><td></td><th><label for="f4">投影</label></th><td class="pick"><select id="f4"><option>透视</option></select><svg viewBox="0 0 10 6"><path d="M1 1l4 4 4-4"/></svg></td></tr>
        <tr class="sec"><th colspan="3">摄像机</th></tr>
        <tr><td></td><th><label for="f5">镜头焦距</label></th><td><input id="f5" value="35.0"></td></tr>
        <tr><td></td><th><label for="f6">旋转</label></th><td><input id="f6" value="0.0"></td></tr>
        <tr><td></td><th><label for="f7">X 座标</label></th><td><input id="f7" value="98.57"></td></tr>
        <tr><td></td><th><label for="f8">Y 座标</label></th><td><input id="f8" value="-155.02"></td></tr>
        <tr><td></td><th><label for="f9">Z 座标</label></th><td><input id="f9" value="109.15"></td></tr>
        <tr class="ro"><td></td><th><label for="f10">目标点距离</label></th><td><input id="f10" value="216.24" readonly></td></tr>
        <tr><td></td><th>位置</th><td><button class="place">放置...</button></td></tr>
        <tr class="sec"><th colspan="3">目标点</th></tr>
        <tr><td></td><th><label for="f11">X 座标</label></th><td><input id="f11" value="4.87"></td></tr>
        <tr><td></td><th><label for="f12">Y 座标</label></th><td><input id="f12" value="7.27"></td></tr>
        <tr><td></td><th><label for="f13">Z 座标</label></th><td><input id="f13" value="1.23"></td></tr>
        <tr><td></td><th>位置</th><td><button class="place">放置...</button></td></tr>
        <tr class="sec"><th colspan="3">底色图案</th></tr>
        <tr><td></td><th><label for="f14">文件名称</label></th><td><div class="file"><input id="f14" value="(无)"><button>...</button></div></td></tr>
        <tr><td></td><th><label for="f15">显示</label></th><td><input id="f15" type="checkbox" checked></td></tr>
        <tr><td></td><th><label for="f16">灰阶</label></th><td><input id="f16" type="checkbox" checked></td></tr>
      </table>
    </div>
  </aside>
</main>

<section class="osnap">
  <label><input type="checkbox" checked>端点</label><label><input type="checkbox" checked>最近点</label><label><input type="checkbox" checked>点</label><label><input type="checkbox">中点</label><label><input type="checkbox" checked>中心点</label><label><input type="checkbox" checked>交点</label><label><input type="checkbox">垂点</label><label><input type="checkbox">切点</label><label><input type="checkbox">四分点</label><label><input type="checkbox">节点</label><label><input type="checkbox">顶点</label><label class="dim"><input type="checkbox" disabled>投影</label><label class="dim last"><input type="checkbox" disabled>停用</label>
</section>

<section class="swatches">
  <button class="tool" aria-label="无"><svg fill="#eaebef"><use href="#s-dot"/></svg></button>
  <button class="tool" aria-label="红"><svg fill="#ff0000"><use href="#s-dot"/></svg></button>
  <button class="tool" aria-label="橙"><svg fill="#ff8000"><use href="#s-dot"/></svg></button>
  <button class="tool" aria-label="黄绿"><svg fill="#80ff00"><use href="#s-dot"/></svg></button>
  <button class="tool" aria-label="绿"><svg fill="#00ff00"><use href="#s-dot"/></svg></button>
  <button class="tool" aria-label="春绿"><svg fill="#00ff80"><use href="#s-dot"/></svg></button>
  <button class="tool" aria-label="青"><svg fill="#00ffff"><use href="#s-dot"/></svg></button>
  <button class="tool" aria-label="天蓝"><svg fill="#0080ff"><use href="#s-dot"/></svg></button>
  <button class="tool" aria-label="蓝"><svg fill="#0000ff"><use href="#s-dot"/></svg></button>
  <button class="tool" aria-label="紫"><svg fill="#8000ff"><use href="#s-dot"/></svg></button>
  <button class="tool" aria-label="洋红"><svg fill="#ff00ff"><use href="#s-dot"/></svg></button>
  <button class="tool" aria-label="玫红"><svg fill="#ff0080"><use href="#s-dot"/></svg></button>
  <button class="tool" aria-label="黑"><svg fill="#000000"><use href="#s-dot"/></svg></button>
  <button class="tool" aria-label="灰"><svg fill="#808080"><use href="#s-dot"/></svg></button>
  <button class="tool" aria-label="白"><svg fill="#ffffff"><use href="#s-dot"/></svg></button>
  <button class="tool" aria-label="移除材质"><svg><use href="#s-none"/></svg></button>
  <button class="tool" aria-label="红漆"><svg fill="#c01010"><use href="#s-tile"/></svg></button>
  <button class="tool" aria-label="橙漆"><svg fill="#e89414"><use href="#s-tile"/></svg></button>
  <button class="tool" aria-label="黄漆"><svg fill="#e0d810"><use href="#s-tile"/></svg></button>
  <button class="tool" aria-label="绿漆"><svg fill="#10a83a"><use href="#s-tile"/></svg></button>
  <button class="tool" aria-label="青漆"><svg fill="#12aea6"><use href="#s-tile"/></svg></button>
  <button class="tool" aria-label="蓝漆"><svg fill="#0a68ee"><use href="#s-tile"/></svg></button>
  <button class="tool" aria-label="紫漆"><svg fill="#6c10b4"><use href="#s-tile"/></svg></button>
  <button class="tool" aria-label="铬"><svg fill="#d0d0d0"><use href="#s-metal"/></svg></button>
  <button class="tool" aria-label="钢"><svg fill="#b8b8b4"><use href="#s-metal"/></svg></button>
  <button class="tool" aria-label="铝"><svg fill="#a8a8a2"><use href="#s-metal"/></svg></button>
  <button class="tool" aria-label="金"><svg fill="#e8cf70"><use href="#s-metal"/></svg></button>
  <button class="tool fly" aria-label="黑漆"><svg><use href="#s-black"/></svg></button>
  <button class="tool fly" aria-label="玻璃"><svg><use href="#s-glass"/></svg></button>
  <button class="tool fly" aria-label="环境"><svg><use href="#s-env"/></svg></button>
</section>

<footer class="status">
  <button class="cp">工作平面</button><span class="co">x 24.60</span><span class="co">y -3.96</span><span class="co">z 0.00</span><span class="co unit">毫米</span><button class="layer"><i></i>预设值</button><button>锁定格点</button><button class="on">正交</button><button class="on">平面模式</button><button class="on">物件锁点</button><button class="on">智慧轨迹</button><button class="on">操作轴</button><button>记录建构历史</button><button>过滤器</button><span class="tol">绝对公差: 0.01</span>
</footer>
</div>
<script src="grid.js"></script>
</body>
</html>
```
FILE: styles.css
```css
* { box-sizing: border-box; }
:root {
  --bg: #eaebef;
  --line: #bcc4da;
  --tab: #d6d6d6;
  --soft: #d9dbe6;
}
body {
  margin: 0;
  background: var(--bg);
  color: #000;
  font: 16px/20px "Noto Sans", "Noto Sans CJK SC", sans-serif;
}
button, input, select { font: inherit; color: inherit; margin: 0; padding: 0; border: 0; background: none; border-radius: 0; }
a { color: inherit; text-decoration: none; }
p, h1 { margin: 0; font: inherit; }
.defs { position: absolute; width: 0; height: 0; }
.app { display: flex; flex-direction: column; min-height: 100vh; overflow: hidden; white-space: nowrap; }

.titlebar { display: flex; align-items: center; height: 29px; background: #4c545a; color: #fff; font-size: 16px; padding: 0 0 1px 2px; gap: 5px; }
.logo { width: 20px; height: 20px; }
.winbtns { margin-left: auto; display: flex; }
.winbtns button { width: 59px; height: 28px; display: grid; place-items: center; }
.winbtns svg { width: 13px; height: 13px; fill: none; stroke: #fff; }

.menu { display: flex; gap: 16px; height: 28px; padding: 2px 7px 0; background: #fff; border-bottom: 4px solid #f0f0f0; font-size: 15px; }

.command { border-left: 8px solid var(--bg); margin-bottom: 3px; font-size: 15px; background: #fff; }
.history { display: flex; justify-content: space-between; height: 31px; border-bottom: 1px solid var(--line); }
.history p { padding: 7px 2px 0; }
.scroll { display: grid; width: 19px; background: #f0f0f0; }
.scroll button { display: grid; place-items: center; }
.scroll svg { width: 8px; height: 6px; fill: none; stroke: #555; stroke-width: 2; }
.prompt { display: flex; height: 23px; align-items: flex-start; padding-left: 2px; gap: 3px; }
.prompt label { font-weight: 700; line-height: 19px; }
.prompt input { flex: 1; outline: 0; }
.caret { width: 1px; height: 19px; background: #000; }
.spin { display: grid; gap: 1px; width: 18px; height: 22px; padding-top: 1px; }
.spin button { border: 1px solid #aaa; background: #f0f0f0; display: grid; place-items: center; height: 10px; }
.spin svg { width: 6px; height: 4px; }

.toolbars { border-top: 1px solid var(--soft); height: 73px; padding-top: 4px; }
.tabs { display: flex; height: 30px; padding-left: 8px; border-bottom: 1px solid var(--line); }
.tab { position: relative; isolation: isolate; height: 29px; padding: 1px 20px 0 38px; margin-left: -21px; }
.tab::before, .tab::after { content: ""; position: absolute; z-index: -1; inset: 0; background: var(--line); clip-path: polygon(0 100%, 23px 3px, 27px 0, calc(100% - 4px) 0, 100% 4px, 100% 100%); }
.tab::after { inset: 1px 1px 0 1px; background: var(--tab); }
.tab.on { z-index: 1; height: 30px; padding: 0 19px 0 20px; margin: 0; }
.tab.on::before, .tab.on::after { clip-path: polygon(0 8px, 7px 0, calc(100% - 4px) 0, 100% 4px, 100% 100%, 0 100%); }
.tab.on::before { bottom: 1px; }
.tab.on::after { inset: 1px 1px 0 0; background: var(--bg); }
.tabcog { margin-left: auto; width: 14px; }
.tabcog svg { width: 14px; height: 14px; }
.tools { display: flex; padding: 1px 8px; }
.tool { position: relative; width: 28px; height: 28px; display: grid; place-items: center; }
.tool svg { width: 24px; height: 24px; display: block; }
.fly::after { content: ""; position: absolute; right: 1px; bottom: 1px; border: 3px solid transparent; border-right-color: #666; border-bottom-color: #666; }

.work { display: flex; flex: 1; }
.side { width: 68px; padding: 9px 11px 0 1px; display: grid; grid-template-columns: 28px 28px; grid-auto-rows: 28px; align-content: start; background: linear-gradient(#c9cfe0, #c9cfe0) 3px 4px / 59px 1px no-repeat, linear-gradient(#c9cfe0, #c9cfe0) 3px 6px / 59px 1px no-repeat; }
.center { flex: 1; min-width: 0; display: flex; flex-direction: column; }
.viewport { flex: 1; position: relative; min-height: 600px; border: 1px solid var(--line); background: #fff; overflow: hidden; }
#grid { position: absolute; inset: 0; width: 100%; height: 100%; }
.vplabel { position: absolute; left: 0; top: 0; display: flex; height: 24px; background: #8ea6c2; border-radius: 0 0 3px 0; font-weight: 700; }
.vplabel button { padding: 0 9px 2px; }
.vplabel .vpmenu { width: 15px; padding: 0; display: grid; place-items: center; border-left: 1px solid #000; }
.vpmenu svg { width: 8px; height: 5px; }
.triad { position: absolute; left: 36px; bottom: 25px; width: 60px; height: 64px; fill: none; font: 16px "Noto Sans", sans-serif; }
.pie { position: absolute; left: 632px; top: 274px; width: 262px; height: 262px; color: #222; font-size: 14px; line-height: 14px; }
.piebg { width: 262px; height: 262px; }
.pie button { position: absolute; display: flex; flex-direction: column; align-items: center; gap: 9px; white-space: normal; transform: translate(-50%, -50%); }
.pie button svg { width: 29px; height: 29px; }
.pie-n { left: 50%; top: 53px; width: 76px; }
.pie-w { left: 50px; top: 124px; }
.pie-e { left: 210px; top: 124px; }
.pie .pie-s { left: 50%; top: 200px; width: 76px; gap: 7px; }

.vptabs { display: flex; height: 28px; }
.vptabs button { position: relative; isolation: isolate; height: 27px; padding: 0 8px 0 15px; }
.vptabs button::before, .vptabs button::after { content: ""; position: absolute; z-index: -1; inset: 0; background: var(--line); clip-path: polygon(0 0, 100% 0, 100% calc(100% - 3px), calc(100% - 3px) 100%, 11px 100%, 0 14px); }
.vptabs button::after { inset: 0 1px 1px 1px; background: var(--tab); }
.vptabs .on::after { background: var(--bg); }
.vptabs .add { width: 40px; display: grid; place-items: center; }
.add svg { width: 12px; height: 12px; fill: none; stroke: #666; }

.panel { width: 444px; margin-left: 7px; padding-top: 10px; padding-bottom: 2px; display: flex; flex-direction: column; background: linear-gradient(#c9cfe0, #c9cfe0) 1px 4px / 100% 1px no-repeat, linear-gradient(#c9cfe0, #c9cfe0) 1px 6px / 100% 1px no-repeat; }
.ptabs { display: flex; height: 29px; padding-left: 1px; }
.ptabs button { position: relative; isolation: isolate; flex: none; width: 74px; height: 29px; margin-right: -14px; padding: 2px 0 0 5px; display: flex; align-items: center; gap: 1px; }
.ptabs button svg { width: 20px; height: 20px; }
.ptabs button::before, .ptabs button::after { content: ""; position: absolute; z-index: -1; inset: 0; background: var(--line); clip-path: polygon(0 4px, 4px 0, 45px 0, 50px 3px, 100% 100%, 0 100%); }
.ptabs button::after { inset: 1px 1px 0 1px; background: var(--tab); }
.ptabs .on { z-index: 1; margin-right: -16px; }
.ptabs .on::after { background: #f7f7f9; }
.pcog { width: 20px; height: 20px; margin: 8px 0 0 5px; color: #b4b4b4; flex: none; }
.pbody { flex: 1; border: 1px solid var(--line); border-width: 1px 0 1px 1px; padding: 4px 6px 0 3px; background: #f7f7f9; }
.pages { display: flex; gap: 4px; height: 37px; padding-left: 1px; }
.pages button { width: 32px; height: 32px; border: 1px solid #a8a8a8; background: #e1e1e1; display: grid; place-items: center; }
.pages .on { border-color: #10509a; background: #b9cfe6; }
.pages svg { width: 28px; height: 28px; }

table { width: 100%; table-layout: fixed; border-spacing: 0; border: 1px solid #e9eaee; border-width: 1px 1px 0; }
.c0 { width: 23px; }
.c1 { width: 194px; }
tr { height: 27px; }
td, th { padding: 0; text-align: left; font-weight: 400; border-bottom: 1px solid #e9eaee; background: #fff; height: 27px; }
td:first-child, .sec th { background: #f7f7f9; }
tr:not(.sec) th { padding-left: 4px; border-right: 1px solid #e9eaee; }
.sec th { height: 33px; padding-left: 3px; font-size: 19px; }
td input { display: block; width: 100%; height: 24px; padding-left: 4px; }
.off { color: #777; }
.off td:last-child, .ro td:last-child { background: var(--bg); }
td select { appearance: none; width: 100%; height: 26px; padding-left: 3px; display: block; background: linear-gradient(#a8a8a8, #a8a8a8) right 25px top 0 / 1px 100% no-repeat, linear-gradient(#e1e1e1, #e1e1e1) right / 25px 100% no-repeat; }
.pick { position: relative; }
.pick svg { position: absolute; right: 8px; top: 10px; width: 10px; height: 6px; fill: none; stroke: #444; pointer-events: none; }
.place { display: block; width: calc(100% - 1px); height: 25px; margin-left: 1px; border: 1px solid #a8a8a8; background: #e1e1e1; line-height: 20px; }
.file { display: flex; height: 26px; align-items: center; }
.file input { flex: 1; padding-left: 2px; }
.file button { width: 25px; height: 25px; border: 1px solid #a8a8a8; background: #e1e1e1; }

input[type=checkbox] { appearance: none; width: 16px; height: 16px; padding: 0; margin: 0; border: 1px solid #333; background: #fff; flex: none; display: grid; place-items: center; }
input[type=checkbox]:checked::before { content: ""; width: 10px; height: 5px; border: solid #333; border-width: 0 0 1px 1px; transform: translateY(-2px) rotate(-48deg); }
input[type=checkbox]:disabled { width: 14px; height: 14px; margin-right: 1px; border-color: #b4b4b4; background: #dedede; }
td input[type=checkbox] { margin-left: 3px; }

.osnap, .swatches { background: linear-gradient(#c9cfe0, #c9cfe0) 4px 50% / 1px 32px no-repeat, linear-gradient(#c9cfe0, #c9cfe0) 6px 50% / 1px 32px no-repeat; }
.osnap { display: flex; align-items: center; gap: 8px; height: 42px; padding-left: 12px; }
.osnap label { display: flex; align-items: center; gap: 4px; }
.osnap .dim { margin-left: 1px; }
.osnap .last { margin-left: 17px; }
.swatches { display: flex; height: 39px; padding: 2px 0 0 9px; border-top: 1px solid var(--soft); }

.status { display: flex; height: 21px; border-top: 1px solid var(--line); font-size: 15px; line-height: 20px; overflow: hidden; }
.status > * { border-right: 1px solid var(--line); padding: 0 8px 0 7px; }
.status .cp { width: 75px; }
.status .co { width: 108px; text-align: center; }
.status .layer { width: 208px; padding: 0 4px; display: flex; align-items: center; gap: 3px; }
.layer i { width: 14px; height: 14px; background: #000; }
.status .on { background: #e3f1fb; font-weight: 700; }
.status .tol { flex: 1; border: 0; padding: 0 1px; }
```
FILE: grid.js
```js
// Draws the construction plane seen through a 35 mm perspective camera.
const camera = [98.57, -155.02, 109.15];
const target = [4.87, 7.27, 1.23];
const EXTENT = 200;
const MAJOR = 10;
const canvas = document.getElementById('grid');

const sub = (a, b) => a.map((v, i) => v - b[i]);
const dot = (a, b) => a[0] * b[0] + a[1] * b[1] + a[2] * b[2];
const cross = (a, b) => [a[1] * b[2] - a[2] * b[1], a[2] * b[0] - a[0] * b[2], a[0] * b[1] - a[1] * b[0]];
const unit = (a) => a.map((v) => v / Math.hypot(...a));

const dir = unit(sub(target, camera));
const right = unit(cross(dir, [0, 0, 1]));
const up = cross(right, dir);

function draw() {
  const w = canvas.width = canvas.clientWidth;
  const h = canvas.height = canvas.clientHeight;
  const focal = h / 2 * 35 / 12;
  const g = canvas.getContext('2d');
  const view = (p) => { const r = sub(p, camera); return [dot(r, right), dot(r, up), dot(r, dir)]; };
  const screen = (v) => [w / 2 + focal * v[0] / v[2], h / 2 - focal * v[1] / v[2]];

  function line(a, b) {
    let p = view(a), q = view(b);
    if (p[2] < 5 && q[2] < 5) return;
    if (p[2] < 5) [p, q] = [q, p];
    if (q[2] < 5) {
      const t = (p[2] - 5) / (p[2] - q[2]);
      q = p.map((v, i) => v + (q[i] - v) * t);
    }
    g.moveTo(...screen(p));
    g.lineTo(...screen(q));
  }
  function family(color, test) {
    g.strokeStyle = color;
    for (let i = -EXTENT; i <= EXTENT; i++) {
      if (!test(i)) continue;
      g.beginPath();
      line([i, -EXTENT, 0], [i, EXTENT, 0]);
      g.stroke();
      g.beginPath();
      line([-EXTENT, i, 0], [EXTENT, i, 0]);
      g.stroke();
    }
  }
  g.lineWidth = 1.25;
  family('#939aa2', (i) => i % MAJOR !== 0);
  family('#7d8189', (i) => i % MAJOR === 0);
  g.lineWidth = 1.6;
  g.strokeStyle = '#9c4040';
  g.beginPath(); line([0, 0, 0], [EXTENT, 0, 0]); g.stroke();
  g.strokeStyle = '#3f9a3f';
  g.beginPath(); line([0, 0, 0], [0, EXTENT, 0]); g.stroke();
}
draw();
window.addEventListener('resize', draw);
```
